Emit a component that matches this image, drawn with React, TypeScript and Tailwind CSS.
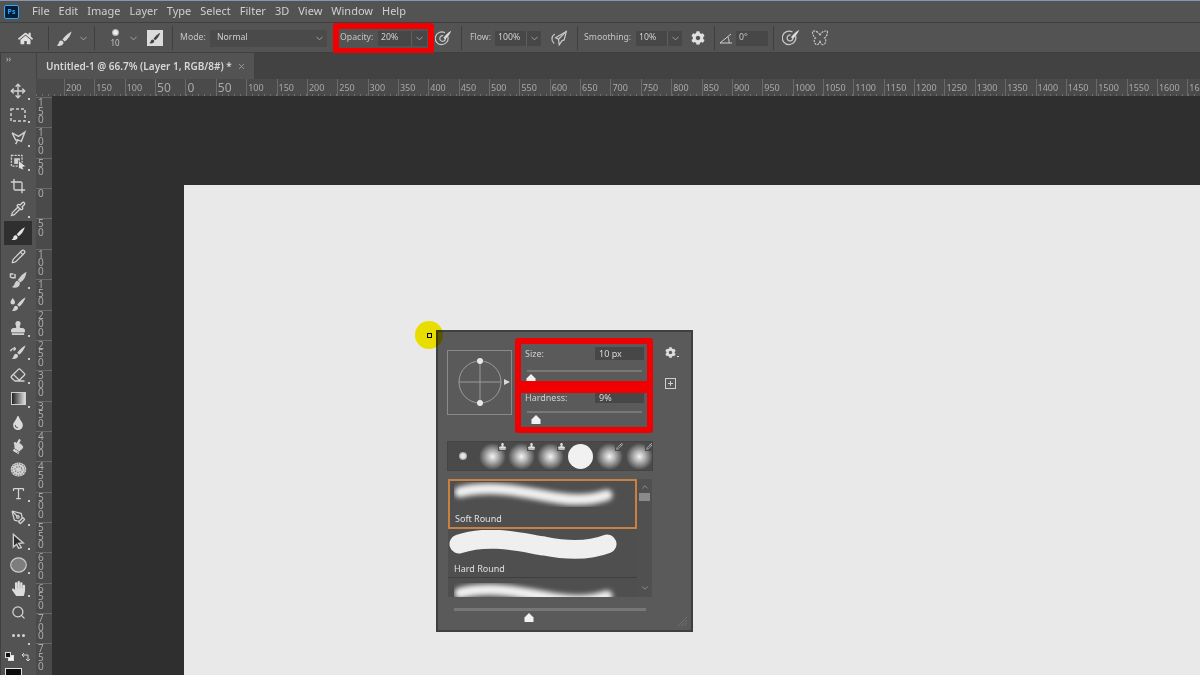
import { Crop, Eraser, Move, PenTool, Pencil, Pipette, Search, Type, ChevronDown, ChevronUp, X } from "lucide-react";
import { FaCog, FaHandPaper, FaHandPointUp, FaHome, FaStamp, FaTint } from "react-icons/fa";
import type { ReactNode } from "react";

const menus = ["File", "Edit", "Image", "Layer", "Type", "Select", "Filter", "3D", "View", "Window", "Help"];
const hLabels = [200, 150, 100, 50, 0, 50, 100, 150, 200, 250, 300, 350, 400, 450, 500, 550, 600, 650, 700, 750, 800, 850, 900, 950, 1000, 1050, 1100, 1150, 1200, 1250, 1300, 1350, 1400, 1450, 1500, 1550, 1600, 1650];
const vLabels = [150, 100, 50, 0, 50, 100, 150, 200, 250, 300, 350, 400, 450, 500, 550, 600, 650, 700, 750];

function BrushIcon({ size = 18, color = "#d8d8d8" }: { size?: number; color?: string }) {
  return (
    <svg width={size} height={size} viewBox="0 0 24 24" fill={color}>
      <path d="M21 3C16 5.5 11.5 10 9.5 13.2L12.2 15.8C15.5 13.5 19.5 8.5 21 3Z" />
      <path d="M8 14.6C5.6 14.6 5 16.4 4.6 18C4.2 19.5 3.2 20.2 2 20.6C5 22 9.4 21.4 10.6 18.4C11.2 16.6 10 15 8 14.6Z" />
    </svg>
  );
}

function Marquee() {
  return (
    <svg width="16" height="16" viewBox="0 0 16 16" fill="none" stroke="#cfcfcf" strokeWidth="1.5" strokeDasharray="3 2">
      <rect x="1" y="2" width="14" height="12" />
    </svg>
  );
}

function Lasso() {
  return (
    <svg width="17" height="17" viewBox="0 0 24 24" fill="none" stroke="#cfcfcf" strokeWidth="2">
      <path d="M3 4L12 9L21 3L16 16L11 14L8 20" />
      <path d="M3 4L8 14L11 14" />
    </svg>
  );
}

function ObjectSelect() {
  return (
    <svg width="17" height="17" viewBox="0 0 24 24">
      <rect x="2" y="2" width="15" height="15" fill="none" stroke="#cfcfcf" strokeWidth="1.8" strokeDasharray="3 1.5" />
      <rect x="6" y="6" width="8" height="8" fill="#cfcfcf" />
      <path d="M12 9L23 18L18 18.5L20 23L12 20Z" fill="#e0e0e0" stroke="#444" strokeWidth="1" />
    </svg>
  );
}

function Healing() {
  return (
    <svg width="18" height="18" viewBox="0 0 24 24" fill="none" stroke="#cfcfcf" strokeWidth="2">
      <path d="M3 9H8V4M6 4H2V9" />
      <path d="M22 3C18 5 15 9 13 12L15 14C18 12 21 8 22 3Z" fill="#cfcfcf" />
      <path d="M11 14C8 15 9 19 6 21C10 22 14 20 13.5 16Z" fill="#cfcfcf" />
    </svg>
  );
}

function HealBrush() {
  return (
    <svg width="18" height="18" viewBox="0 0 24 24" fill="#d4d4d4">
      <path d="M22 3C17 6 13 10 11 13L13.6 15.6C17 13 20.5 8.5 22 3Z" />
      <path d="M9.4 14.4C7 14.6 6.6 16.4 6 18C5.6 19.4 4.8 20 3.6 20.6C6.6 22 11 21.2 12 18C12.4 16.4 11.4 15 9.4 14.4Z" />
      <path d="M5 4C6.5 6.4 8 7.8 8 9.6A3 3 0 0 1 2 9.6C2 7.8 3.5 6.4 5 4Z" />
    </svg>
  );
}

function HistoryBrush() {
  return (
    <svg width="18" height="18" viewBox="0 0 24 24" fill="#d4d4d4">
      <path d="M22 3C17 6 13 10 11 13L13.6 15.6C17 13 20.5 8.5 22 3Z" />
      <path d="M9.4 14.4C7 14.6 6.6 16.4 6 18C5.6 19.4 4.8 20 3.6 20.6C6.6 22 11 21.2 12 18C12.4 16.4 11.4 15 9.4 14.4Z" />
      <path d="M2 11C3 8 6 7 9 8M9 8L6.5 5.5M9 8L6 10" fill="none" stroke="#d4d4d4" strokeWidth="1.8" />
    </svg>
  );
}

function Sponge() {
  return (
    <svg width="17" height="17" viewBox="0 0 24 24">
      <ellipse cx="12" cy="12" rx="11" ry="10" fill="#d0d0d0" />
      <ellipse cx="12" cy="12" rx="9" ry="8" fill="none" stroke="#666" strokeWidth="1.6" strokeDasharray="1.5 2" />
      <ellipse cx="12" cy="12" rx="5" ry="4" fill="none" stroke="#666" strokeWidth="1.6" strokeDasharray="1.5 2" />
    </svg>
  );
}

function Arrow() {
  return (
    <svg width="16" height="16" viewBox="0 0 24 24" fill="#2f2f2f" stroke="#cfcfcf" strokeWidth="2">
      <path d="M5 2L20 15L13 15.5L17 22L13 23L10 17L5 21Z" />
    </svg>
  );
}

function Ellipse() {
  return (
    <svg width="17" height="16" viewBox="0 0 24 22">
      <ellipse cx="12" cy="11" rx="11" ry="10" fill="#7d7d7d" stroke="#cfcfcf" strokeWidth="1.6" />
    </svg>
  );
}

function Target({ size = 18 }: { size?: number }) {
  return (
    <svg width={size} height={size} viewBox="0 0 24 24" fill="none" stroke="#c8c8c8" strokeWidth="1.7">
      <path d="M18 9A9 9 0 1 1 14 4" />
      <path d="M14.5 10.5A4 4 0 1 1 11.5 8" />
      <path d="M23 1C19 3 15 7 12 11L14 13C18 10 21 6 23 1Z" fill="#dcdcdc" stroke="none" />
    </svg>
  );
}

function Airbrush() {
  return (
    <svg width="17" height="17" viewBox="0 0 24 24" fill="none" stroke="#c8c8c8" strokeWidth="1.7">
      <path d="M7 6C2 8 1 15 6 19" />
      <path d="M23 2L8 11L12 13L13 21L17 15L20 14Z" />
      <path d="M12 13L23 2" />
    </svg>
  );
}

function Butterfly() {
  return (
    <svg width="18" height="18" viewBox="0 0 24 24" fill="none" stroke="#c8c8c8" strokeWidth="1.5" strokeDasharray="3 1.2">
      <path d="M12 8C9 3 5 2 2 3C2 7 3 10 6 12C3 14 4 20 8 21C10 21 12 18 12 15C12 18 14 21 16 21C20 20 21 14 18 12C21 10 22 7 22 3C19 2 15 3 12 8Z" />
    </svg>
  );
}

function AngleIcon() {
  return (
    <svg width="14" height="12" viewBox="0 0 14 12" fill="none" stroke="#cfcfcf" strokeWidth="1">
      <path d="M13 11H1L12 2" />
      <path d="M9 5C10 7 10 9 10 11" />
    </svg>
  );
}

function Thumb() {
  return (
    <svg width="10" height="9" viewBox="0 0 10 9" fill="#f2f2f2" className="block">
      <path d="M5 0L9.5 4.5V9H0.5V4.5Z" />
    </svg>
  );
}

function Stroke({ soft }: { soft?: boolean }) {
  return (
    <svg width="175" height="32" viewBox="0 0 175 32" className="block">
      <defs>
        <filter id="soft-edge" x="-10%" y="-60%" width="120%" height="220%">
          <feGaussianBlur stdDeviation="2.4" />
        </filter>
      </defs>
      {soft ? (
        <path
          d="M6 11C36 4 66 10 92 15C116 20 136 20 153 14"
          fill="none"
          stroke="#f0f0f0"
          strokeLinecap="round"
          strokeWidth={11}
          filter="url(#soft-edge)"
        />
      ) : (
        <path
          d="M10 14C40 4 70 12 95 16C120 21 140 21 158 14"
          fill="none"
          stroke="#efefef"
          strokeLinecap="round"
          strokeWidth={19}
        />
      )}
    </svg>
  );
}

function Sep() {
  return <div className="h-[24px] w-px bg-[#3f3f3f]" />;
}

function Chevron() {
  return <ChevronDown size={11} strokeWidth={1.6} className="text-[#bdbdbd]" />;
}

function Combo({ value, width, split }: { value: string; width: string; split: string }) {
  return (
    <div className={`flex h-[15px] items-center bg-[#474747] ${width}`}>
      <div className={`pl-[3px] text-[#d2d2d2] ${split}`}>{value}</div>
      <div className="flex h-full flex-1 items-center justify-center border-l border-[#5f5f5f]">
        <Chevron />
      </div>
    </div>
  );
}

function Tool({ children, corner, active }: { children: ReactNode; corner?: boolean; active?: boolean }) {
  return (
    <div className={`relative mx-[3px] flex h-[23.7px] shrink-0 items-center justify-center ${active ? "bg-[#2f2f2f]" : ""}`}>
      {children}
      {corner && <span className="absolute bottom-[3px] right-[2px] h-[2px] w-[2px] bg-[#c8c8c8]" />}
    </div>
  );
}

function Preset({ kind, mark }: { kind: "dot" | "soft" | "hard"; mark?: "stamp" | "brush" }) {
  return (
    <div className="relative flex w-[29.4px] shrink-0 items-center justify-center">
      {kind === "dot" && <div className="h-[8px] w-[8px] rounded-full bg-[radial-gradient(circle,#e8e8e8_30%,#6a6a6a_100%)]" />}
      {kind === "soft" && (
        <div className="h-[27px] w-[27px] shrink-0 rounded-full bg-[radial-gradient(circle_closest-side,#f4f4f4_0%,#b4b4b4_40%,#4a4a4a_100%)]" />
      )}
      {kind === "hard" && <div className="h-[25px] w-[25px] rounded-full bg-[#f1f1f1]" />}
      {mark && (
        <span className="absolute right-0 top-0 flex h-[9px] w-[9px] items-center justify-center bg-[#4a4a4a]">
          {mark === "stamp" ? <FaStamp size={7} color="#e0e0e0" /> : <Pencil size={7} color="#e0e0e0" />}
        </span>
      )}
    </div>
  );
}

export default function App() {
  return (
    <div className="flex h-[675px] w-[1200px] flex-col overflow-hidden bg-[#535353] font-['Noto_Sans',sans-serif] text-[#d0d0d0] blur-[0.35px]">
      {/* menu bar */}
      <div className="flex h-[23px] shrink-0 items-center border-t border-b border-t-[#8795b5] border-b-[#3f3f3f] bg-[#535353] pl-[4px]">
        <div className="flex h-[14px] w-[15px] items-center justify-center rounded-[2px] border border-[#31a8ff] bg-[#001e36] text-[7px] font-bold leading-none text-[#31a8ff]">
          Ps
        </div>
        <div className="ml-[13px] flex gap-[9px] text-[11px] text-[#cfcfcf]">
          {menus.map((m) => (
            <span key={m}>{m}</span>
          ))}
        </div>
      </div>

      {/* options bar */}
      <div className="flex h-[30px] shrink-0 items-center border-b border-[#3f3f3f] bg-[#535353] pt-[1px] text-[8.7px] text-[#c4c4c4]">
        <div className="ml-[18px]">
          <FaHome size={15} color="#e0e0e0" />
        </div>
        <div className="ml-[15px]"><Sep /></div>
        <div className="ml-[6px]"><BrushIcon size={19} /></div>
        <div className="ml-[4px]"><Chevron /></div>
        <div className="ml-[5px]"><Sep /></div>
        <div className="ml-[14px] flex w-[12px] flex-col items-center">
          <div className="h-[7px] w-[7px] rounded-full bg-[radial-gradient(circle,#f0f0f0_30%,#777_100%)]" />
          <span className="mt-[3px] text-[8px] leading-none">10</span>
        </div>
        <div className="ml-[7px]"><Chevron /></div>
        <div className="ml-[8px] flex h-[16px] w-[16px] items-center justify-center bg-[#dcdcdc]">
          <BrushIcon size={14} color="#444" />
        </div>
        <div className="ml-[9px]"><Sep /></div>
        <span className="ml-[7px] w-[25px]">Mode:</span>
        <div className="ml-[5px] flex h-[17px] w-[117px] items-center justify-between bg-[#4a4a4a] pl-[7px] pr-[2px] text-[#cfcfcf]">
          Normal
          <Chevron />
        </div>
        <div className="ml-[6px] flex h-[31px] w-[101px] shrink-0 items-center rounded-[3px] border-[6px] border-[#f00000] pl-[1px]">
          <span className="w-[32px]">Opacity:</span>
          <div className="ml-[6px]">
            <Combo value="20%" width="w-[49px]" split="w-[33px]" />
          </div>
        </div>
        <div className="ml-[1px]"><Target size={17} /></div>
        <div className="ml-[9px]"><Sep /></div>
        <span className="ml-[8px] w-[21px]">Flow:</span>
        <div className="ml-[4px]"><Combo value="100%" width="w-[46px]" split="w-[31px]" /></div>
        <div className="ml-[9px]"><Airbrush /></div>
        <div className="ml-[10px]"><Sep /></div>
        <span className="ml-[6px] w-[46px]">Smoothing:</span>
        <div className="ml-[6px]"><Combo value="10%" width="w-[46px]" split="w-[31px]" /></div>
        <div className="ml-[9px]"><FaCog size={14} color="#e0e0e0" /></div>
        <div className="ml-[9px]"><Sep /></div>
        <div className="ml-[4px]"><AngleIcon /></div>
        <div className="ml-[3px] flex h-[15px] w-[32px] items-center bg-[#474747] pl-[3px]">0°</div>
        <div className="ml-[5px]"><Sep /></div>
        <div className="ml-[8px]"><Target size={18} /></div>
        <div className="ml-[11px]"><Butterfly /></div>
      </div>

      <div className="flex min-h-0 flex-1">
        {/* tools */}
        <div className="flex w-[36px] shrink-0 flex-col overflow-hidden border-l border-[#3f3f3f] bg-[#535353] pr-[1px]">
          <div className="h-[26.1px] shrink-0 pl-[5px] text-[8px] leading-[11px] text-[#c8c8c8]">››</div>
          <Tool corner><Move size={16} color="#d4d4d4" /></Tool>
          <Tool corner><Marquee /></Tool>
          <Tool corner><Lasso /></Tool>
          <Tool corner><ObjectSelect /></Tool>
          <Tool><Crop size={16} color="#d4d4d4" /></Tool>
          <Tool corner><Pipette size={16} color="#d4d4d4" /></Tool>
          <Tool active><BrushIcon size={17} color="#e4e4e4" /></Tool>
          <Tool><Pencil size={15} color="#d4d4d4" /></Tool>
          <Tool corner><Healing /></Tool>
          <Tool><HealBrush /></Tool>
          <Tool corner><FaStamp size={14} color="#d4d4d4" /></Tool>
          <Tool corner><HistoryBrush /></Tool>
          <Tool corner><Eraser size={16} color="#d4d4d4" /></Tool>
          <Tool corner>
            <div className="h-[13px] w-[15px] border border-[#cfcfcf] bg-[linear-gradient(90deg,#222,#ddd)]" />
          </Tool>
          <Tool><FaTint size={14} color="#dcdcdc" /></Tool>
          <Tool><FaHandPointUp size={14} color="#d4d4d4" className="rotate-[30deg]" /></Tool>
          <Tool><Sponge /></Tool>
          <Tool corner><Type size={15} color="#d4d4d4" /></Tool>
          <Tool corner><PenTool size={15} color="#d4d4d4" /></Tool>
          <Tool corner><Arrow /></Tool>
          <Tool corner><Ellipse /></Tool>
          <Tool corner><FaHandPaper size={15} color="#dcdcdc" /></Tool>
          <Tool><Search size={15} color="#d4d4d4" /></Tool>
          <Tool corner>
            <div className="flex gap-[2px]">
              <span className="h-[3px] w-[3px] rounded-full bg-[#d4d4d4]" />
              <span className="h-[3px] w-[3px] rounded-full bg-[#d4d4d4]" />
              <span className="h-[3px] w-[3px] rounded-full bg-[#d4d4d4]" />
            </div>
          </Tool>
          <div className="flex h-[18px] shrink-0 items-center gap-[7px] pl-[4px]">
            <div className="relative h-[9px] w-[9px]">
              <div className="absolute bottom-0 right-0 h-[6px] w-[6px] border border-[#ddd] bg-[#f4f4f4]" />
              <div className="absolute left-0 top-0 h-[6px] w-[6px] border border-[#ddd] bg-[#111]" />
            </div>
            <svg width="10" height="10" viewBox="0 0 10 10" fill="none" stroke="#d4d4d4" strokeWidth="1">
              <path d="M1 3H7V9M1 3L3 1M1 3L3 5M7 9L5 7M7 9L9 7" />
            </svg>
          </div>
          <div className="ml-[4px] mt-[2px] h-[16px] w-[17px] shrink-0 border border-[#e4e4e4] bg-[#0c0c0c]" />
        </div>

        <div className="flex min-w-0 flex-1 flex-col">
          {/* tabs */}
          <div className="flex h-[26px] shrink-0 bg-[#424242] pl-[1px]">
            <div className="flex w-[217px] items-center justify-between bg-[#535353] pl-[9px] pr-[8px] text-[10px] font-semibold text-[#d8d8d8]">
              <span>Untitled-1 @ 66.7% (Layer 1, RGB/8#) *</span>
              <X size={9} color="#aaaaaa" />
            </div>
          </div>

          {/* horizontal ruler */}
          <div className="relative flex h-[17px] shrink-0 overflow-hidden bg-[#4a4a4a] pl-[28px]">
            {hLabels.map((n, i) => (
              <div
                key={i}
                className={`h-full w-[30.36px] shrink-0 border-l border-[#6a6a6a] pl-[1px] leading-[18px] text-[#a9a9a9] ${i >= 3 && i <= 5 ? "text-[12px]" : "text-[9px]"}`}
              >
                {n}
              </div>
            ))}
            <div className="absolute bottom-0 left-0 h-[2px] w-full bg-[repeating-linear-gradient(90deg,#6f6f6f_0_1px,transparent_1px_6px)]" />
          </div>

          <div className="flex min-h-0 flex-1">
            {/* vertical ruler */}
            <div className="w-[16px] shrink-0 overflow-hidden bg-[#4a4a4a] pt-[1px]">
              {vLabels.map((n, i) => (
                <div key={i} className="h-[30.36px] border-t border-[#6a6a6a] pl-[2px]">
                  <div className="w-[7px] break-all text-[10px] leading-[8.6px] text-[#a9a9a9]">{n}</div>
                </div>
              ))}
            </div>

            {/* canvas */}
            <div className="min-w-0 flex-1 overflow-hidden bg-[#2f2f2f] pl-[132px] pt-[89px]">
              <div className="relative h-[600px] w-[1100px] bg-[#e9e9e9]">
                <div className="absolute left-[252px] top-[145px] h-[302px] w-[257px] border-2 border-[#3f3f3f] bg-[#5a5a5a] pl-[9px] pt-[6px] text-[9px]">
                  <div className="flex">
                    <div className="mt-[12px] h-[65px] w-[65px] shrink-0 border border-[#8a8a8a]">
                      <svg width="63" height="63" viewBox="0 0 63 63" fill="none" stroke="#9a9a9a" strokeWidth="1">
                        <circle cx="32" cy="31" r="21" />
                        <path d="M32 10V52M11 31H53" />
                        <circle cx="32" cy="10" r="3" fill="#e8e8e8" stroke="none" />
                        <circle cx="32" cy="52" r="3" fill="#e8e8e8" stroke="none" />
                        <path d="M56 28L62 31L56 34Z" fill="#d8d8d8" stroke="none" />
                      </svg>
                    </div>
                    <div className="ml-[3px] w-[138px] shrink-0 rounded-[3px] border-[6px] border-[#f00000]">
                      <div className="h-[37px] overflow-hidden pl-[4px] pr-[3px]">
                        <div className="mt-[3px] flex items-center justify-between">
                          <span className="leading-[13px]">Size:</span>
                          <div className="h-[13px] w-[49px] bg-[#474747] pl-[4px] leading-[13px] text-[#d8d8d8]">10 px</div>
                        </div>
                        <div className="ml-[2px] mt-[10px] h-[2px] w-[115px] bg-[#777]" />
                        <div className="ml-[1px] mt-[2px]"><Thumb /></div>
                      </div>
                      <div className="h-[12px] bg-[#f00000]" />
                      <div className="h-[34px] pl-[4px] pr-[3px]">
                        <div className="flex items-center justify-between">
                          <span className="leading-[10px]">Hardness:</span>
                          <div className="h-[10px] w-[49px] bg-[#474747] pl-[4px] leading-[10px] text-[#d8d8d8]">9%</div>
                        </div>
                        <div className="ml-[2px] mt-[8px] h-[2px] w-[115px] bg-[#777]" />
                        <div className="ml-[6px] mt-[2px]"><Thumb /></div>
                      </div>
                    </div>
                    <div className="ml-[12px] mt-[9px] flex flex-col items-start">
                      <div className="flex items-end gap-[1px]">
                        <FaCog size={11} color="#dedede" />
                        <span className="mb-[1px] h-[1px] w-[2px] bg-[#dedede]" />
                      </div>
                      <div className="mt-[20px] flex h-[11px] w-[11px] items-center justify-center border border-[#cfcfcf]">
                        <svg width="7" height="7" viewBox="0 0 7 7" stroke="#cfcfcf" strokeWidth="1">
                          <path d="M3.5 1V6M1 3.5H6" />
                        </svg>
                      </div>
                    </div>
                  </div>

                  {/* presets */}
                  <div className="mt-[8px] flex h-[30px] w-[206px] overflow-hidden border border-[#444] bg-[#4a4a4a]">
                    <Preset kind="dot" />
                    <Preset kind="soft" mark="stamp" />
                    <Preset kind="soft" mark="stamp" />
                    <Preset kind="soft" mark="stamp" />
                    <Preset kind="hard" />
                    <Preset kind="soft" mark="brush" />
                    <Preset kind="soft" mark="brush" />
                  </div>

                  {/* brush list */}
                  <div className="ml-[1px] mt-[8px] flex h-[118px] w-[204px]">
                    <div className="w-[189px] shrink-0 overflow-hidden bg-[#4f4f4f]">
                      <div className="h-[50px] border-2 border-[#c8813f] pl-[4px]">
                        <Stroke soft />
                        <div className="ml-[1px] text-[9px] leading-[11px] text-[#e0e0e0]">Soft Round</div>
                      </div>
                      <div className="h-[49px] border-b border-[#3f3f3f] pl-[1px] pt-[1px]">
                        <Stroke />
                        <div className="ml-[5px] mt-[1px] text-[9px] leading-[11px] text-[#e0e0e0]">Hard Round</div>
                      </div>
                      <div className="pl-[6px] pt-[4px]">
                        <Stroke soft />
                      </div>
                    </div>
                    <div className="flex w-[15px] shrink-0 flex-col items-center bg-[#505050] pt-[3px]">
                      <ChevronUp size={10} color="#9a9a9a" />
                      <div className="mt-[1px] h-[8px] w-[11px] bg-[#8a8a8a]" />
                      <div className="flex-1" />
                      <ChevronDown size={10} color="#9a9a9a" className="mb-[4px]" />
                    </div>
                  </div>

                  {/* bottom slider */}
                  <div className="ml-[7px] mt-[11px] h-[3px] w-[192px] bg-[#777]" />
                  <div className="ml-[77px] mt-[2px]"><Thumb /></div>
                  <svg width="11" height="11" viewBox="0 0 11 11" stroke="#6e6e6e" strokeWidth="1" className="absolute bottom-[3px] right-[3px]">
                    <path d="M1 10L10 1M4 10L10 4M7 10L10 7" />
                  </svg>
                </div>

                {/* cursor highlight */}
                <div className="absolute left-[231px] top-[136px] flex h-[28px] w-[28px] items-center justify-center rounded-full bg-[#fff200] mix-blend-multiply">
                  <div className="h-[5px] w-[5px] border border-black bg-[#fff200]" />
                </div>
              </div>
            </div>
          </div>
        </div>
      </div>
    </div>
  );
}
